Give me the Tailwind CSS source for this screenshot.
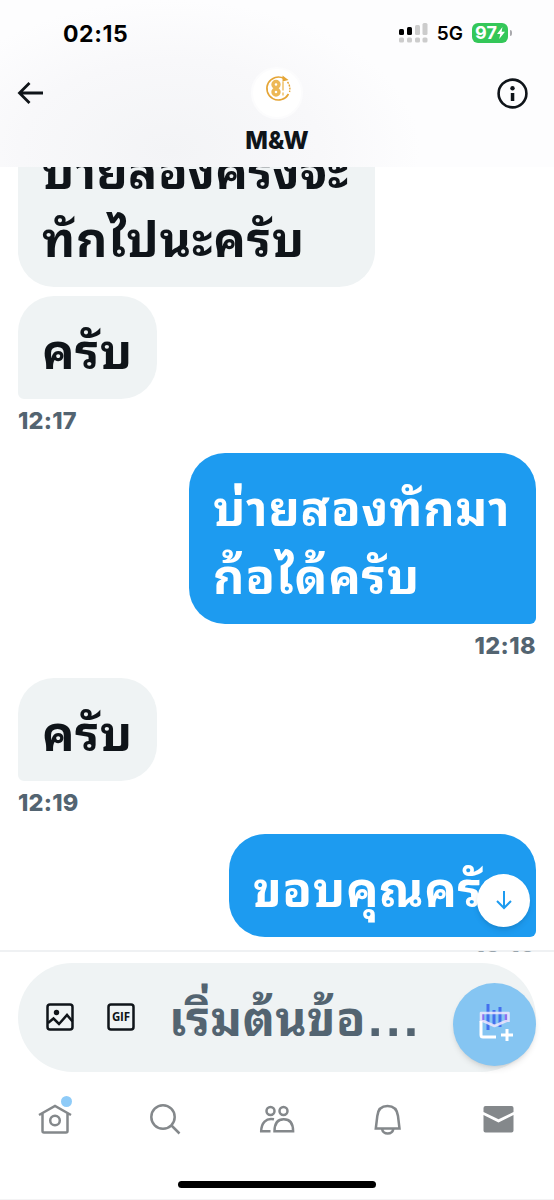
<!DOCTYPE html>
<html lang="th">
<head>
    <meta charset="UTF-8">
    <meta name="viewport" content="width=device-width, initial-scale=1.0">
    <title>M&amp;W</title>
    <script src="https://cdn.jsdelivr.net/npm/@tailwindcss/browser@4"></script>
</head>
<body class="bg-white text-[#0f1419] font-['Inter','Noto_Sans_Thai_Looped','Loma','Garuda','Waree','Umpush','Sarabun','Noto_Sans',sans-serif]">

<div class="w-[554px] h-[1200px] flex flex-col overflow-hidden">

    <!-- Header -->
    <header class="h-[167px] shrink-0 bg-[radial-gradient(ellipse_250px_150px_at_170px_150px,#f3f4f6_0%,#f8f8fa_60%,#fdfdfe_100%)]">
        <!-- Status bar -->
        <div class="h-[66px] flex items-center justify-between pl-[63px] pr-[42px] text-black">
            <span class="text-[23px] leading-7 font-bold tracking-[0.6px] mt-0.5">02:15</span>
            <div class="flex items-center">
                <svg class="w-[29px] h-5 mr-[9px]" viewBox="0 0 29 20">
                    <g fill="#000"><rect x="0" y="6" width="5" height="6" rx="1.5"/><rect x="8" y="4" width="5" height="8" rx="1.5"/></g>
                    <g fill="#ccc"><rect x="16" y="2" width="5" height="10" rx="1.5"/><rect x="23.5" y="0" width="5" height="12" rx="1.5"/><rect x="0" y="14.5" width="5" height="5" rx="1.5"/><rect x="8" y="14.5" width="5" height="5" rx="1.5"/><rect x="16" y="14.5" width="5" height="5" rx="1.5"/><rect x="23.5" y="14.5" width="5" height="5" rx="1.5"/></g>
                </svg>
                <span class="text-[19px] leading-6 font-semibold mr-[9px] mt-0.5">5G</span>
                <div class="w-9 h-5 rounded-md bg-[#34c759] text-white flex items-center justify-center mr-0.5">
                    <span class="text-[18px] leading-5 font-bold">97</span>
                    <svg class="w-2 h-3" viewBox="0 0 8 12"><path d="M5.5 0 0 7h3.3L2.2 12 8 4.8H4.6z" fill="#fff"/></svg>
                </div>
                <div class="w-0.5 h-1.5 rounded-r bg-[#a9a9ad]"></div>
            </div>
        </div>

        <!-- Conversation bar -->
        <div class="h-[54px] grid grid-cols-3 items-center px-[17px]">
            <svg class="w-[27px] h-6" viewBox="0 0 27 24" fill="none" stroke="#0f1419" stroke-width="2.8"><path d="M26 12H2.5M12.5 2l-10 10 10 10"/></svg>
            <div class="w-[52px] h-[52px] rounded-full border-2 border-[#fcfcfd] bg-white justify-self-center">
                <svg class="w-12 h-12" viewBox="0 0 48 48" fill="none" stroke="#e5a536">
                    <path d="M31 9.5A11.5 11.5 0 1 0 35.500 25" stroke-width="1.6"/>
                    <path d="M34.5 13a11.500 11.500 0 0 1 2 10" stroke-width="1.4" stroke-dasharray="2 1"/>
                    <path d="m29.500 6.500 6 4.500-6 1.500z" fill="#e5a536" stroke="none"/>
                    <circle cx="23" cy="15.500" r="3" stroke-width="3.400" stroke="#edb855"/>
                    <circle cx="23" cy="23" r="3" stroke-width="3.400" stroke="#edb855"/>
                    <path d="M30 12.500v9M30 23.500v3" stroke-width="1.300" stroke="#edb855"/>
                </svg>
            </div>
            <svg class="w-[31px] h-[31px] justify-self-end mr-[9px]" viewBox="0 0 31 31"><circle cx="15.5" cy="15.5" r="13.9" fill="none" stroke="#0f1419" stroke-width="2.6"/><circle cx="15.5" cy="10.3" r="2.2" fill="#0f1419"/><path d="M13.8 15h3.5v8h-3.5z" fill="#0f1419"/></svg>
        </div>
        <h1 class="mt-1.5 text-center text-[24px] leading-[30px] font-extrabold">M&amp;W</h1>
    </header>

    <!-- Messages -->
    <main class="h-[785px] shrink-0 relative overflow-hidden px-[18px] flex flex-col justify-start">
        <div class="-mt-[51px] w-[357px] h-[171px] shrink-0 self-start rounded-[36px] bg-[#eff3f4] pl-6 pt-[22px] text-[48.5px] leading-[68px] font-bold tracking-[0.8px] whitespace-nowrap"><p class="tracking-[0.3px]">บ่ายสองครึ่งจะ</p><p>ทักไปนะครับ</p></div>
        <div class="mt-[9px] w-[139px] h-[103px] shrink-0 self-start rounded-[36px] rounded-bl-[6px] bg-[#eff3f4] pl-6 pt-[22px] text-[48.5px] leading-[68px] font-bold tracking-[0.5px] whitespace-nowrap"><p>ครับ</p></div>
        <time class="h-[54px] shrink-0 pt-[8px] text-[23.5px] leading-7 font-extrabold tracking-[0.2px] text-[#536471]">12:17</time>
        <div class="w-[347px] h-[171px] shrink-0 self-end rounded-[36px] rounded-br-[6px] bg-[#1d9bf0] text-white pl-6 pt-[22px] text-[48.5px] leading-[68px] font-bold tracking-[0.8px] whitespace-nowrap"><p>บ่ายสองทักมา</p><p>ก้อได้ครับ</p></div>
        <time class="h-[54px] shrink-0 pt-[8px] text-right text-[23.5px] leading-7 font-extrabold tracking-[0.4px] text-[#536471]">12:18</time>
        <div class="w-[139px] h-[103px] shrink-0 self-start rounded-[36px] rounded-bl-[6px] bg-[#eff3f4] pl-6 pt-[22px] text-[48.5px] leading-[68px] font-bold tracking-[0.5px] whitespace-nowrap"><p>ครับ</p></div>
        <time class="h-[53px] shrink-0 pt-[8px] text-[23.5px] leading-7 font-extrabold tracking-[0.2px] text-[#536471]">12:19</time>
        <div class="w-[307px] h-[103px] shrink-0 self-end rounded-[36px] rounded-br-[6px] bg-[#1d9bf0] text-white pl-6 pt-[22px] text-[48.5px] leading-[68px] font-bold tracking-[0.6px] whitespace-nowrap"><p>ขอบคุณครับ</p></div>
        <time class="h-[54px] shrink-0 pt-[9px] text-right text-[23.5px] leading-7 font-extrabold tracking-[0.4px] text-[#536471]">12:19</time>

        <!-- Scroll to latest -->
        <button class="absolute left-[477px] top-[707px] w-[53px] h-[53px] rounded-full bg-white shadow-md flex items-center justify-center">
            <svg class="w-4 h-5 -mt-0.5" viewBox="0 0 16 20" fill="none" stroke="#1d9bf0" stroke-width="2"><path d="M8 1v17M1 11l7 7 7-7"/></svg>
        </button>
    </main>

    <!-- Composer -->
    <div class="relative -mt-0.5 h-[122px] shrink-0 border-t-2 border-[#dfe3e8]/50 px-[18px] pt-[11px]">
        <div class="h-[109px] rounded-full bg-[#eff3f4] flex items-center pl-7">
            <svg class="w-7 h-7 -mt-0.5" viewBox="0 0 28 28" fill="none" stroke="#0f1419" stroke-width="2.5"><rect x="1.5" y="1.5" width="25" height="25" rx="2.5"/><circle cx="10.500" cy="9.500" r="2.700" fill="#0f1419" stroke="none"/><path d="m2 20 5.500-4.500 5.500 5.500 8-9 5.500 6.500"/></svg>
            <svg class="w-7 h-7 ml-[33px] -mt-0.5" viewBox="0 0 28 28"><rect x="1.5" y="1.5" width="25" height="25" rx="2.5" fill="none" stroke="#0f1419" stroke-width="2.5"/><text x="14" y="18.2" text-anchor="middle" textLength="18" font-family="Open Sans" font-size="11.5" font-weight="700" fill="#0f1419">GIF</text></svg>
            <p class="ml-[34px] mt-0.5 text-[48px] leading-[68px] font-bold tracking-[0.4px] text-[#536471] whitespace-nowrap">เริ่มต้นข้อ<span class="font-['Liberation_Sans'] text-[52px] leading-none tracking-[3.5px] ml-0.5">...</span></p>
        </div>
        <!-- New message -->
        <button class="absolute left-[453px] top-[31px] w-[83px] h-[83px] rounded-full bg-[#85c5f2] shadow-md flex items-center justify-center">
            <svg class="w-10 h-10 -mt-1" viewBox="0 0 40 40" fill="none">
                <g stroke="#4470ee" stroke-width="3"><path d="M13 1v26M19 7v15M25 4v20"/></g>
                <path d="M8 11v8M31 11v8" stroke="#8f6ff0" stroke-width="2.5"/>
                <path d="M6 19V10h27.500v9M6 17l13.500 6L33.500 17" stroke="#eee6fe" stroke-opacity="0.85" stroke-width="2.6" stroke-linejoin="round"/>
                <path d="M6 18v14q0 2 2 2h13M26 32h12M32 26v12" stroke="#fff" stroke-width="3"/>
            </svg>
        </button>
    </div>

    <!-- Tab bar -->
    <nav class="flex-1 flex flex-col items-center border-b border-[#f3f3f4]">
        <div class="w-full h-[94px] flex justify-around items-center text-[#84888b]">
            <div class="relative">
                <svg class="w-[34px] h-[34px]" viewBox="0 0 34 34" fill="none" stroke="currentColor" stroke-width="2.5"><path d="M1 13 17 4l16 9M4.500 11.500V29q0 1.500 1.500 1.500h22q1.500 0 1.500-1.500V11.500"/><circle cx="17" cy="18.500" r="4.800"/></svg>
                <span class="absolute left-[23px] -top-[6px] w-[11px] h-[11px] rounded-full bg-[#8ecbf8]"></span>
            </div>
            <svg class="w-[34px] h-[34px]" viewBox="0 0 34 34" fill="none" stroke="currentColor" stroke-width="2.5"><circle cx="14" cy="15" r="11.700"/><path d="m22 23 8.500 8.500"/></svg>
            <svg class="w-9 h-[34px]" viewBox="0 0 36 34" fill="none" stroke="currentColor" stroke-width="2.5"><circle cx="11.500" cy="9" r="4"/><circle cx="24.500" cy="9" r="4"/><path d="M15 17.300C7 15.500 2.200 21 2.200 29.300H11.500M15.500 29.300q0-12 9.300-12t9.300 12z"/></svg>
            <svg class="w-[34px] h-[34px]" viewBox="0 0 34 34" fill="none" stroke="currentColor" stroke-width="2.5"><path d="M4.800 26.500 6.300 14Q7.300 4 16.500 4T27 14l1.500 12.500zM11 27q1 4.500 5.700 4.500t5.700-4.500"/></svg>
            <svg class="w-[34px] h-[34px]" viewBox="0 0 34 34" fill="currentColor"><path d="M1.500 10V6q0-2 2-2h26q2 0 2 2v4l-15 7.300z"/><path d="m1.500 13 15 7.500 15-7.500v15.500q0 2-2 2h-26q-2 0-2-2z"/></svg>
        </div>
        <div class="mt-[15px] w-[198px] h-[7px] rounded-full bg-black"></div>
    </nav>
</div>

</body>
</html>
